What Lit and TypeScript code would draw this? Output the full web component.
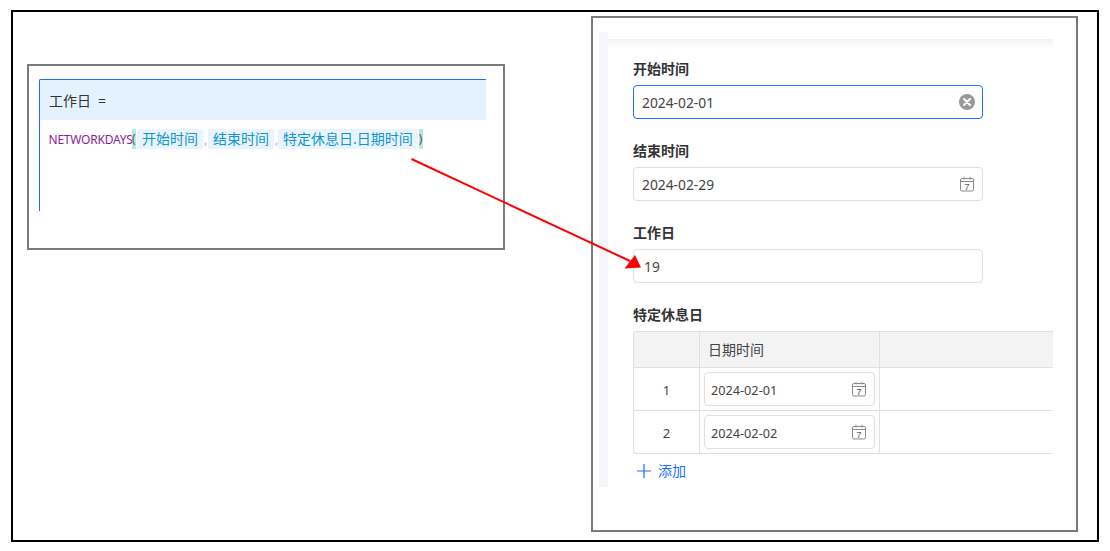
import { LitElement, html, css, svg } from "lit";
import { customElement } from "lit/decorators.js";

const calendar = html`<svg class="cal" width="16" height="16" viewBox="0 0 16 16" fill="none">
  <rect x="1.5" y="2.5" width="13" height="12.5" rx="1.5" stroke="#8a8a8a" stroke-width="1"></rect>
  <path d="M1.5 5.5H14.5" stroke="#8a8a8a" stroke-width="1"></path>
  <path d="M5 0.8V3.5M11 0.8V3.5" stroke="#a88f6a" stroke-width="1"></path>
  <text x="8" y="13.5" text-anchor="middle" font-size="9" font-family="'Liberation Sans',sans-serif" fill="#555">7</text>
</svg>`;

const clear = html`<svg width="16" height="16" viewBox="0 0 16 16">
  <circle cx="8" cy="8" r="8" fill="#999"></circle>
  <path d="M5 5L11 11M11 5L5 11" stroke="#fff" stroke-width="2" stroke-linecap="round"></path>
</svg>`;

@customElement("app-root")
export class AppRoot extends LitElement {
  static styles = css`
    :host {
      display: block;
      width: 1110px;
      height: 551px;
      background: #fff;
      font-family: "Noto Sans", "Noto Sans CJK SC", sans-serif;
      color: #333;
      overflow: hidden;
    }
    .frame {
      position: relative;
      box-sizing: border-box;
      width: 1088px;
      height: 532px;
      margin: 10px 0 0 11px;
      border: 2px solid #000;
      display: flex;
      align-items: flex-start;
      background: #fff;
    }
    .left {
      box-sizing: border-box;
      width: 478px;
      height: 186px;
      margin: 52px 0 0 14px;
      border: 2px solid #7a7a7a;
      padding: 13px 17px 0 10px;
    }
    .editor {
      height: 131px;
      border-top: 1px solid #1a6fff;
      border-left: 1px solid #1a6fff;
      border-top-left-radius: 2px;
    }
    .formula-head {
      height: 40px;
      background: #e3f2fe;
      display: flex;
      align-items: center;
      padding-left: 9px;
      font-size: 14px;
      color: #333;
      gap: 7px;
    }
    .formula {
      display: flex;
      align-items: center;
      height: 20px;
      margin-top: 9px;
      padding-left: 8.5px;
      font-size: 12px;
      white-space: nowrap;
    }
    .fn {
      color: #8e1d9c;
      width: 83.5px;
      letter-spacing: -0.22px;
    }
    .paren {
      width: 4px;
      height: 20px;
      line-height: 20px;
      background: #b5e8e2;
      color: #555;
      font-size: 12px;
    }
    .tag {
      height: 20px;
      line-height: 20px;
      background: #eaf4fe;
      color: #0d96d2;
      font-size: 14px;
      border-radius: 2px;
      padding: 0 5px;
      margin-left: 1px;
    }
    .tag.last {
      margin-right: 1px;
    }
    .comma {
      width: 3px;
      margin-left: 1px;
      color: #b5b0a0;
      font-size: 12px;
    }
    .comma.tight {
      width: 2px;
    }
    .right {
      box-sizing: border-box;
      width: 487px;
      height: 516px;
      margin: 4px 0 0 86px;
      border: 2px solid #7a7a7a;
      padding: 14px 0 0 6px;
    }
    .panel {
      display: flex;
      height: 455px;
    }
    .strip {
      width: 9px;
      background: #f5f6fb;
      flex: none;
    }
    .body {
      width: 445px;
      flex: none;
      overflow: hidden;
    }
    .shade {
      height: 10px;
      margin-top: 7px;
      background: linear-gradient(#f3f3f3, #fff);
    }
    .form {
      padding: 12px 0 0 25px;
    }
    .label {
      height: 16px;
      line-height: 16px;
      font-size: 14px;
      font-weight: 700;
      color: #333;
      margin-bottom: 8px;
    }
    .input {
      box-sizing: border-box;
      width: 350px;
      height: 34px;
      border: 1px solid #e0e0e0;
      border-radius: 4px;
      display: flex;
      align-items: center;
      justify-content: space-between;
      padding: 0 7px 0 8px;
      font-size: 13.8px;
      color: #444;
      margin-bottom: 24px;
    }
    .input.focus {
      border-color: #1a6fff;
    }
    .input.plain {
      padding-left: 10px;
    }
    .table {
      width: 420px;
      border: 1px solid #e0e0e0;
      border-right: none;
      border-radius: 3px 0 0 3px;
      box-sizing: border-box;
    }
    .row {
      display: grid;
      grid-template-columns: 66px 180px 1fr;
      height: 43px;
      border-top: 1px solid #e0e0e0;
      box-sizing: border-box;
    }
    .row.head {
      height: 35px;
      border-top: none;
      background: #f3f3f3;
    }
    .cell {
      border-right: 1px solid #e0e0e0;
      display: flex;
      align-items: center;
      box-sizing: border-box;
      font-size: 13px;
      color: #444;
    }
    .cell:last-child {
      border-right: none;
    }
    .cell.idx {
      justify-content: center;
      padding-top: 2px;
    }
    .cell.title {
      padding: 0 0 2px 8px;
      font-size: 14px;
    }
    .cell.date {
      padding-left: 4px;
    }
    .mini {
      box-sizing: border-box;
      width: 171px;
      height: 34px;
      border: 1px solid #e0e0e0;
      border-radius: 4px;
      display: flex;
      align-items: center;
      justify-content: space-between;
      padding: 0 7px 0 6px;
      font-size: 12.7px;
      color: #444;
    }
    .mini span {
      padding-top: 2px;
    }
    .add {
      display: flex;
      align-items: center;
      gap: 7px;
      height: 34px;
      padding-left: 4px;
      color: #1a6fff;
      font-size: 14px;
    }
    .add span {
      padding-bottom: 2px;
    }
    .arrow {
      position: absolute;
      left: -13px;
      top: -12px;
      width: 1110px;
      height: 551px;
      pointer-events: none;
    }
  `;

  private formula() {
    return html`<div class="formula">
      <span class="fn">NETWORKDAYS</span><span class="paren">(</span>
      <span class="tag">开始时间</span><span class="comma">,</span>
      <span class="tag">结束时间</span><span class="comma tight">,</span>
      <span class="tag last">特定休息日.日期时间</span>
      <span class="paren">)</span>
    </div>`;
  }

  render() {
    return html`<div class="frame">
      <section class="left">
        <div class="editor">
          <div class="formula-head"><span>工作日</span><span>=</span></div>
          ${this.formula()}
        </div>
      </section>
      <section class="right">
        <div class="panel">
          <div class="strip"></div>
          <div class="body">
            <div class="shade"></div>
            <div class="form">
              <div class="label">开始时间</div>
              <div class="input focus"><span>2024-02-01</span>${clear}</div>
              <div class="label">结束时间</div>
              <div class="input"><span>2024-02-29</span>${calendar}</div>
              <div class="label">工作日</div>
              <div class="input plain"><span>19</span></div>
              <div class="label">特定休息日</div>
              <div class="table">
                <div class="row head">
                  <div class="cell"></div>
                  <div class="cell title">日期时间</div>
                  <div class="cell"></div>
                </div>
                ${["2024-02-01", "2024-02-02"].map(
                  (d, i) => html`<div class="row">
                    <div class="cell idx">${i + 1}</div>
                    <div class="cell date"><div class="mini"><span>${d}</span>${calendar}</div></div>
                    <div class="cell"></div>
                  </div>`
                )}
              </div>
              <div class="add">
                <svg width="14" height="14" viewBox="0 0 14 14"><path d="M7 0V14M0 7H14" stroke="#1a6fff" stroke-width="1.2"></path></svg>
                <span>添加</span>
              </div>
            </div>
          </div>
        </div>
      </section>
      <svg class="arrow" viewBox="0 0 1110 551">
        ${svg`<line x1="411.5" y1="159" x2="630" y2="261" stroke="#f00" stroke-width="2"></line>
        <polygon points="624.5,268.5 641,267.5 635,255" fill="#f00"></polygon>`}
      </svg>
    </div>`;
  }
}
